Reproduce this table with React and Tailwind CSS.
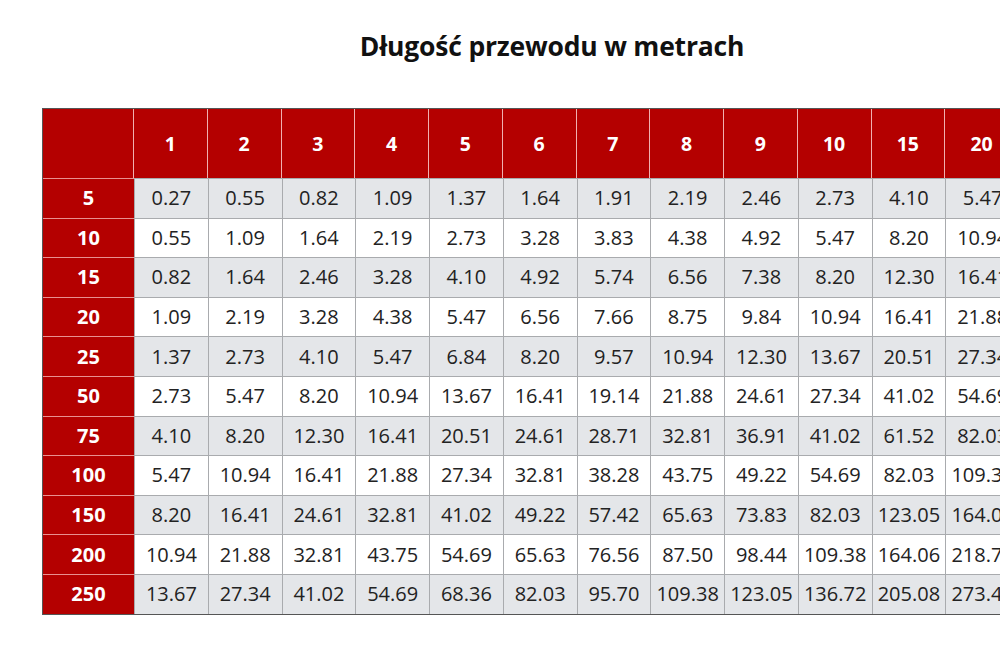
const cols = ['1', '2', '3', '4', '5', '6', '7', '8', '9', '10', '15', '20'];

const rows = [
  ['5', ['0.27', '0.55', '0.82', '1.09', '1.37', '1.64', '1.91', '2.19', '2.46', '2.73', '4.10', '5.47']],
  ['10', ['0.55', '1.09', '1.64', '2.19', '2.73', '3.28', '3.83', '4.38', '4.92', '5.47', '8.20', '10.94']],
  ['15', ['0.82', '1.64', '2.46', '3.28', '4.10', '4.92', '5.74', '6.56', '7.38', '8.20', '12.30', '16.41']],
  ['20', ['1.09', '2.19', '3.28', '4.38', '5.47', '6.56', '7.66', '8.75', '9.84', '10.94', '16.41', '21.88']],
  ['25', ['1.37', '2.73', '4.10', '5.47', '6.84', '8.20', '9.57', '10.94', '12.30', '13.67', '20.51', '27.34']],
  ['50', ['2.73', '5.47', '8.20', '10.94', '13.67', '16.41', '19.14', '21.88', '24.61', '27.34', '41.02', '54.69']],
  ['75', ['4.10', '8.20', '12.30', '16.41', '20.51', '24.61', '28.71', '32.81', '36.91', '41.02', '61.52', '82.03']],
  ['100', ['5.47', '10.94', '16.41', '21.88', '27.34', '32.81', '38.28', '43.75', '49.22', '54.69', '82.03', '109.38']],
  ['150', ['8.20', '16.41', '24.61', '32.81', '41.02', '49.22', '57.42', '65.63', '73.83', '82.03', '123.05', '164.06']],
  ['200', ['10.94', '21.88', '32.81', '43.75', '54.69', '65.63', '76.56', '87.50', '98.44', '109.38', '164.06', '218.75']],
  ['250', ['13.67', '27.34', '41.02', '54.69', '68.36', '82.03', '95.70', '109.38', '123.05', '136.72', '205.08', '273.44']],
];

export default function App() {
  return (
    <div className="w-[1000px] h-[648px] bg-white overflow-hidden font-['Open_Sans',sans-serif]">
      {/* Title */}
      <h1 className="pt-[27px] pl-[104px] text-center text-[26.5px] leading-[38px] font-bold text-[#111] tracking-[-0.2px]">
        Długość przewodu w metrach
      </h1>

      {/* Table */}
      <div className="mt-[43px] ml-[42px] w-[976px] border-y border-l border-[#555]">
        <div className="grid grid-cols-[91px_repeat(12,73.75px)] h-[69px] bg-[#b40000]">
          <div className="border-r border-[#f0b0b0]" />
          {cols.map(c => (
            <div key={c} className="flex items-center justify-center border-r border-[#f0b0b0] text-white font-bold text-[19.5px]">
              {c}
            </div>
          ))}
        </div>
        {rows.map(([len, vals], i) => (
          <div
            key={len}
            className={`grid grid-cols-[91px_repeat(12,73.75px)] h-[39.6px] ${i % 2 === 0 ? 'bg-[#e4e6e9]' : 'bg-white'}`}
          >
            <div className="flex items-center justify-center bg-[#b40000] border-t border-[#e89090] text-white font-bold text-[20px]">
              {len}
            </div>
            {vals.map((v, j) => (
              <div
                key={j}
                className="flex items-center justify-center whitespace-nowrap border-t border-l border-[#a9abae] text-[#222] text-[20px]"
              >
                {v}
              </div>
            ))}
          </div>
        ))}
      </div>
    </div>
  );
}
